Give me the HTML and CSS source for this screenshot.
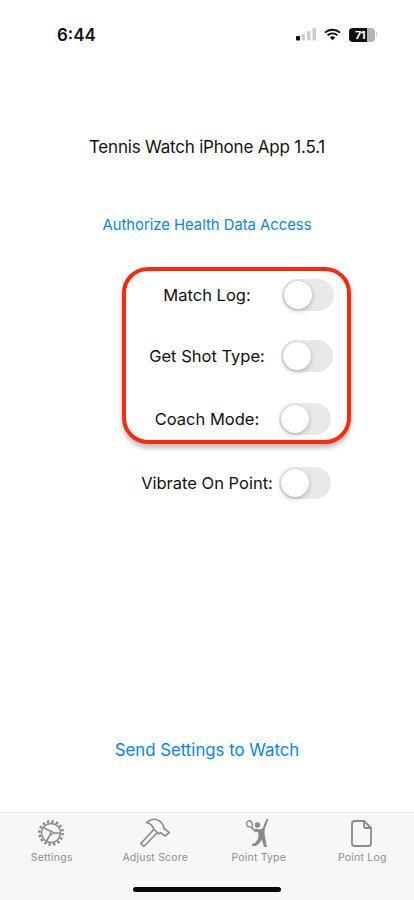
FILE: index.html
```html
<!DOCTYPE html>
<html lang="en">
<head>
<meta charset="utf-8">
<title>Tennis Watch</title>
<link rel="stylesheet" href="styles.css">
</head>
<body>
<div class="screen">
  <header class="status">
    <span class="time">6:44</span>
    <div class="status-icons">
      <svg class="signal" width="20" height="13" viewBox="0 0 20 13"><rect x="0" y="8" width="4" height="4.500" rx="1" fill="#111"/><rect x="5.500" y="6" width="3.500" height="6.500" rx="1" fill="#ccc"/><rect x="11" y="3" width="3.500" height="9.500" rx="1" fill="#ccc"/><rect x="16.500" y="0" width="3.500" height="12.500" rx="1" fill="#ccc"/></svg>
      <svg class="wifi" width="17" height="13" viewBox="0 0 18 13"><path d="M1 4.500 C5.500 .5 12.500 .5 17 4.500 M3.800 7.300 C6.800 4.800 11.200 4.800 14.200 7.300" fill="none" stroke="#111" stroke-width="2"/><path d="M6.200 9.400 C8 8 10 8 11.800 9.400 L9 12.500 Z" fill="#111"/></svg>
      <div class="battery"><div class="battery-body"><span class="battery-fill"></span><span class="battery-num">71</span></div><span class="battery-cap"></span></div>
    </div>
  </header>
  <main class="content">
    <h1 class="title">Tennis Watch iPhone App 1.5.1</h1>
    <a class="link auth">Authorize Health Data Access</a>
    <div class="settings">
      <div class="row row-match"><span class="label">Match Log:</span><span class="toggle"><span class="knob"></span></span></div>
      <div class="row row-shot"><span class="label">Get Shot Type:</span><span class="toggle"><span class="knob"></span></span></div>
      <div class="row row-coach"><span class="label">Coach Mode:</span><span class="toggle"><span class="knob"></span></span></div>
      <div class="row row-vibrate"><span class="label">Vibrate On Point:</span><span class="toggle"><span class="knob"></span></span></div>
      <div class="callout"></div>
    </div>
    <a class="link send">Send Settings to Watch</a>
  </main>
  <nav class="tabbar">
    <div class="tab">
      <svg width="30" height="30" viewBox="1 0 30 30" fill="none" stroke="#8a8a8a"><circle cx="15" cy="15" r="9.500" stroke-width="1.500"/><circle cx="15" cy="15" r="11.600" stroke-width="2.600" stroke-dasharray="2.400 2.160"/><path d="M15 12.800 17.800 15 13.700 17.500 Z" stroke-width="1.400" stroke-linejoin="round"/><path d="M14 13 7.500 9.500M17.800 15H24.500M13.700 17.500 10.500 23" stroke-width="1.500"/></svg>
      <span>Settings</span>
    </div>
    <div class="tab">
      <svg width="32" height="30" viewBox="0 0 32 30" fill="none" stroke="#8a8a8a" stroke-width="1.600" stroke-linejoin="round"><path d="M15 11.300 1.700 25.700 5 28.300 19 14"/><path d="M7.700 4.700 C10 2.500 12.500 1.300 15 1.300 C19 1.300 22 3.500 24.300 7.300 L25 10.500 30.300 14.700 26 18 21.700 14.700 19.300 15.700 15 11.300 12.700 7.300 C11.500 5.800 9.500 5 7.700 4.700 Z"/></svg>
      <span>Adjust Score</span>
    </div>
    <div class="tab">
      <svg width="28" height="30" viewBox="0 0 28 30" fill="none"><ellipse cx="4.500" cy="6" rx="2.800" ry="3.200" stroke="#8a8a8a" stroke-width="1.300" transform="rotate(-30 4.500 6)"/><path d="M6 9 11.500 14" stroke="#8a8a8a" stroke-width="1.700"/><circle cx="12.500" cy="7" r="2.700" fill="#8a8a8a"/><path d="M23.500 1 19.800 11 19.500 15 20 19 22 29H19L17 21.500 14.500 25 11 28H7V26L10 25 13 21 13.500 17 13 14 10 12.500 10.500 10.500 14.500 11.500 17.500 10.500 21.500 1Z" fill="#8a8a8a"/></svg>
      <span>Point Type</span>
    </div>
    <div class="tab">
      <svg width="24" height="30" viewBox="0 0 24 30" fill="none" stroke="#8a8a8a" stroke-width="1.800" stroke-linejoin="round"><path d="M14 3H4.500Q2 3 2 5.500V25.500Q2 28 4.500 28H18.500Q21 28 21 25.500V10ZM14 3V8Q14 10 16 10H21"/></svg>
      <span>Point Log</span>
    </div>
    <div class="home"></div>
  </nav>
</div>
</body>
</html>
```
FILE: styles.css
```css
* { box-sizing: border-box; }
html, body { margin: 0; padding: 0; background: #fff; }
body { font-family: Inter, "Liberation Sans", sans-serif; color: #111; }
.screen { width: 414px; height: 900px; display: flex; flex-direction: column; overflow: hidden; }

.status { height: 60px; display: flex; justify-content: space-between; align-items: center; padding: 9px 37px 0 57px; flex: none; }
.time { font-size: 17px; font-weight: 600; }
.status-icons { display: flex; align-items: center; gap: 8px; }
.battery { display: flex; align-items: center; gap: 1px; }
.battery-body { position: relative; width: 26px; height: 14px; border-radius: 4px; background: #b5b5b5; overflow: hidden; display: flex; align-items: center; padding-left: 6px; }
.battery-fill { position: absolute; left: 0; top: 0; bottom: 0; width: 71%; background: #111; }
.battery-num { position: relative; color: #fff; font-size: 11px; font-weight: 700; letter-spacing: -.6px; }
.battery-cap { width: 1px; height: 5px; background: #ccc; }

.content { flex: 1; display: flex; flex-direction: column; align-items: center; }
.title { margin: 76px 0 0; font-size: 17px; font-weight: 400; line-height: 22px; letter-spacing: -.2px; }
.link { color: #0a84e8; }
.auth { margin-top: 56px; font-size: 14.800px; line-height: 22px; }

.settings { position: relative; width: 100%; margin-top: 43px; }
.row { height: 32px; display: grid; grid-template-columns: 1fr auto 1fr; align-items: center; font-size: 16.500px; }
.label { grid-column: 2; line-height: 22px; }
.toggle { grid-column: 3; position: relative; width: 52px; height: 32px; border-radius: 16px; background: #e8e8ea; }
.knob { position: absolute; left: 2px; top: 2px; width: 28px; height: 28px; border-radius: 50%; background: #fff; box-shadow: 0 2px 5px rgba(0,0,0,.22), 0 0 1px rgba(0,0,0,.2); }
.row-match { margin-bottom: 29px; }
.row-match .toggle { margin-left: 31px; }
.row-shot { margin-bottom: 31px; }
.row-shot .toggle { margin-left: 16px; }
.row-coach { margin-bottom: 32px; }
.row-coach .toggle { margin-left: 20px; }
.row-vibrate .toggle { margin-left: 6px; }

.callout { position: absolute; left: 122px; top: -12px; width: 229px; height: 177px; border: 4px solid #fb2a0c; border-radius: 26px; box-shadow: 0 4px 5px rgba(0,0,0,.25); }

.send { margin-top: auto; margin-bottom: 51px; font-size: 16.800px; line-height: 22px; }

.tabbar { position: relative; height: 88px; flex: none; display: grid; grid-template-columns: repeat(4, 1fr); background: #f7f7f7; border-top: 1px solid #e6e6e6; padding: 5px 0 0; }
.tab { display: flex; flex-direction: column; align-items: center; color: #8e8e8e; font-size: 10.500px; letter-spacing: .2px; height: 48px; gap: 3px; }
.tab svg { height: 30px; }
.home { position: absolute; left: 133px; bottom: 8px; width: 148px; height: 5px; border-radius: 3px; background: #0a0a0a; }
```
